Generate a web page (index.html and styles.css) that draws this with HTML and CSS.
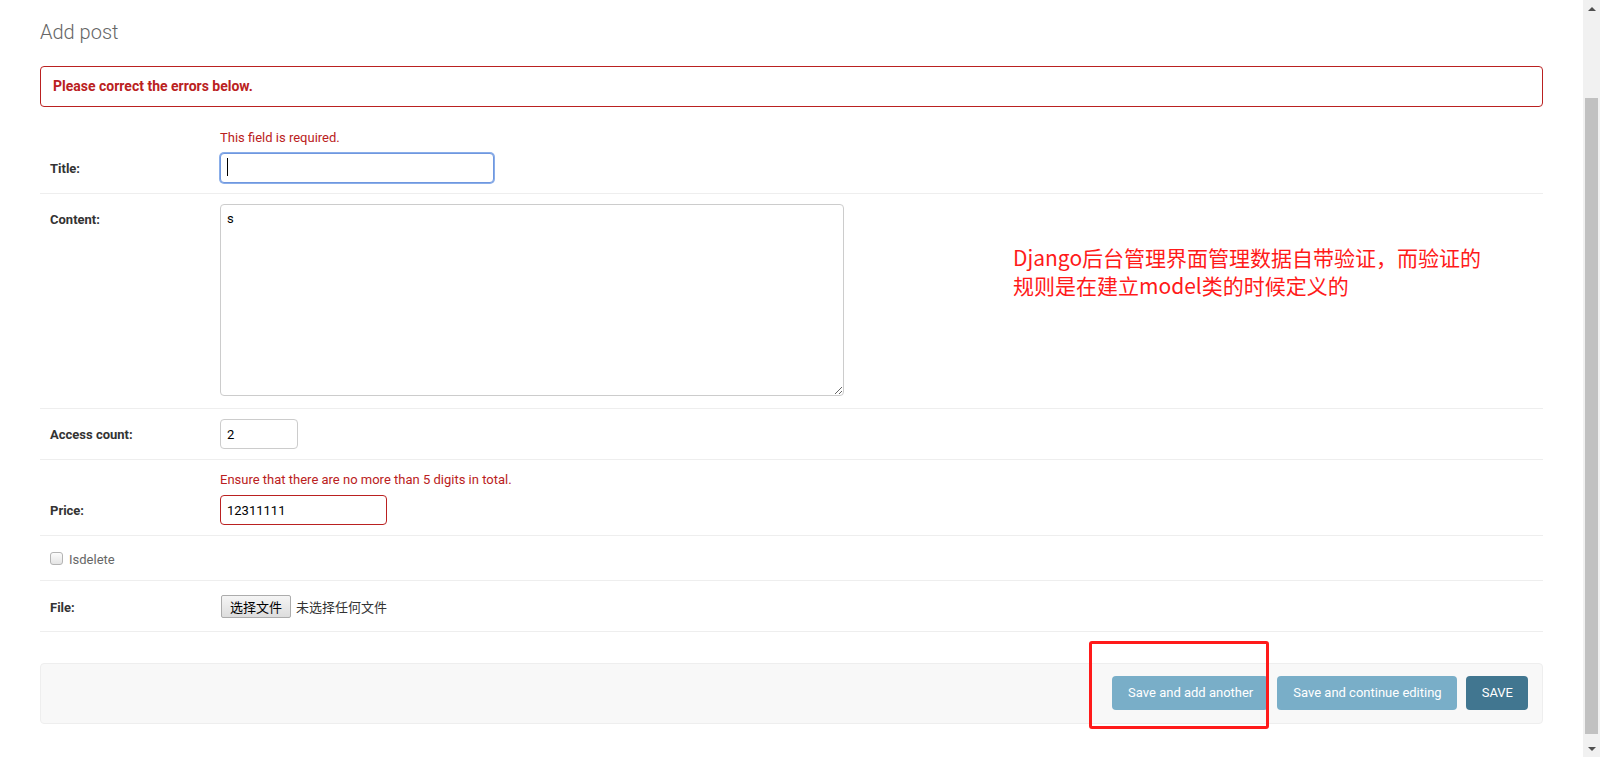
FILE: index.html
```html
<!DOCTYPE html>
<html lang="zh-CN">
<head>
    <meta charset="UTF-8">
    <meta name="viewport" content="width=device-width, initial-scale=1.0">
    <title>Add post | Django site admin</title>
    <link rel="stylesheet" href="styles.css">
</head>
<body>
    <div id="content" class="content">
        <h1>Add post</h1>

        <form class="post-form" action="" method="post">
            <p class="errornote">Please correct the errors below.</p>

            <fieldset class="module aligned">
                <div class="form-row errors field-title">
                    <ul class="errorlist"><li>This field is required.</li></ul>
                    <div class="field-line">
                        <label class="required" for="id_title">Title:</label>
                        <div class="input-wrap">
                            <input type="text" id="id_title" class="vTextField is-focused" maxlength="50">
                            <span class="caret"></span>
                        </div>
                    </div>
                </div>

                <div class="form-row field-content">
                    <div class="field-line">
                        <label class="required" for="id_content">Content:</label>
                        <textarea id="id_content" class="vLargeTextField" cols="40" rows="10">s</textarea>
                    </div>
                </div>

                <div class="form-row field-access_count">
                    <div class="field-line">
                        <label class="required" for="id_access_count">Access count:</label>
                        <input type="number" id="id_access_count" class="vIntegerField" value="2">
                    </div>
                </div>

                <div class="form-row errors field-price">
                    <ul class="errorlist"><li>Ensure that there are no more than 5 digits in total.</li></ul>
                    <div class="field-line">
                        <label class="required" for="id_price">Price:</label>
                        <input type="text" id="id_price" class="vDecimalField" value="12311111">
                    </div>
                </div>

                <div class="form-row field-isdelete">
                    <div class="checkbox-row">
                        <input type="checkbox" id="id_isdelete" class="fake-checkbox">
                        <label class="vCheckboxLabel" for="id_isdelete">Isdelete</label>
                    </div>
                </div>

                <div class="form-row field-file">
                    <div class="field-line centered">
                        <label class="required" for="id_file">File:</label>
                        <div class="file-input">
                            <button type="button" class="file-btn">选择文件</button>
                            <span class="file-name">未选择任何文件</span>
                        </div>
                    </div>
                </div>
            </fieldset>

            <div class="submit-row">
                <input type="submit" value="Save and add another" name="_addanother">
                <input type="submit" value="Save and continue editing" name="_continue">
                <input type="submit" value="SAVE" class="default" name="_save">
            </div>
        </form>

        <!-- 截图上的标注 -->
        <div class="note">Django后台管理界面管理数据自带验证，而验证的<br>规则是在建立model类的时候定义的</div>
        <div class="note-box"></div>
    </div>

    <div class="scrollbar">
        <div class="scroll-arrow up"></div>
        <div class="scroll-track">
            <div class="scroll-thumb"></div>
        </div>
        <div class="scroll-arrow down"></div>
    </div>
</body>
</html>
```

FILE: styles.css
```css
* {
    margin: 0;
    padding: 0;
    box-sizing: border-box;
}

html, body {
    height: 100%;
}

body {
    font-family: Roboto, "Noto Sans CJK SC", sans-serif;
    font-size: 13px;
    color: #333;
    background: #fff;
    display: flex;
    overflow: hidden;
}

.content {
    flex: 1;
    position: relative;
    padding: 20px 40px 0 40px;
}

h1 {
    font-size: 20px;
    font-weight: 300;
    line-height: 24px;
    color: #666;
    margin-bottom: 22px;
}

.errornote {
    font-size: 14px;
    font-weight: bold;
    line-height: 19px;
    color: #ba2121;
    border: 1px solid #ba2121;
    border-radius: 4px;
    padding: 10px 12px;
    margin-bottom: 11px;
}

fieldset {
    border: none;
}

.form-row {
    padding: 10px;
    border-bottom: 1px solid #eee;
}

.errorlist {
    list-style: none;
    color: #ba2121;
    line-height: 19px;
    padding-left: 170px;
    margin-bottom: 6px;
}

.field-line {
    display: flex;
    align-items: flex-start;
}

.field-line.centered {
    align-items: center;
    height: 30px;
}

.field-line label {
    width: 170px;
    flex-shrink: 0;
    padding-top: 8px;
    line-height: 16px;
}

.field-line.centered label {
    padding-top: 3px;
}

label.required {
    font-weight: bold;
    color: #333;
}

input[type=text],
input[type=number],
textarea {
    font-family: Roboto, sans-serif;
    font-size: 13px;
    line-height: 18px;
    color: #000;
    border: 1px solid #ccc;
    border-radius: 4px;
    padding: 5px 6px;
    background: #fff;
    outline: none;
}

input[type=number] {
    -moz-appearance: textfield;
}

input[type=number]::-webkit-inner-spin-button,
input[type=number]::-webkit-outer-spin-button {
    -webkit-appearance: none;
}

.input-wrap {
    position: relative;
}

.vTextField {
    width: 274px;
    height: 30px;
}

.vTextField.is-focused {
    border-color: #6f97df;
    box-shadow: 0 0 0 1px #8aaee9;
}

.caret {
    position: absolute;
    left: 7px;
    top: 5px;
    width: 1px;
    height: 18px;
    background: #000;
}

.vLargeTextField {
    width: 624px;
    height: 192px;
    margin-bottom: 2px;
    resize: both;
}

.vIntegerField {
    width: 78px;
    height: 30px;
}

.vDecimalField {
    width: 167px;
    height: 30px;
}

.field-price .vDecimalField {
    border-color: #ba2121;
}

.checkbox-row {
    display: flex;
    align-items: center;
    height: 24px;
    padding-top: 1px;
}

.fake-checkbox {
    -webkit-appearance: none;
    appearance: none;
    width: 13px;
    height: 13px;
    border: 1px solid #b4b4b4;
    border-radius: 3px;
    background: linear-gradient(#fcfcfc, #e4e4e4);
}

.vCheckboxLabel {
    color: #666;
    padding-left: 6px;
    padding-top: 2px;
    line-height: 16px;
}

.file-input {
    display: flex;
    align-items: center;
    gap: 5px;
    padding-left: 1px;
}

.file-btn {
    font-family: "Noto Sans CJK SC", sans-serif;
    font-size: 13px;
    line-height: 19px;
    height: 23px;
    padding: 0 8px;
    color: #000;
    border: 1px solid #acacac;
    border-radius: 2px;
    background: linear-gradient(#f5f5f5, #dddddd);
}

.file-name {
    font-family: "Noto Sans CJK SC", sans-serif;
    color: #333;
}

.submit-row {
    display: flex;
    justify-content: flex-end;
    gap: 9px;
    margin-top: 31px;
    padding: 12px 14px 13px;
    background: #f8f8f8;
    border: 1px solid #eee;
    border-radius: 4px;
}

.submit-row input {
    font-family: Roboto, sans-serif;
    font-size: 13px;
    line-height: 14px;
    color: #fff;
    background: #79aec8;
    border: none;
    border-radius: 4px;
    padding: 10px 15px 10px 16px;
    cursor: pointer;
}

.submit-row input.default {
    background: #417690;
}

.note {
    position: absolute;
    left: 1013px;
    top: 243px;
    font-family: "Noto Sans CJK SC", sans-serif;
    font-size: 21px;
    line-height: 28px;
    color: #ff1a1a;
}

.note-box {
    position: absolute;
    left: 1089px;
    top: 641px;
    width: 180px;
    height: 88px;
    border: 3px solid #ff1a1a;
    border-radius: 3px;
}

.scrollbar {
    width: 17px;
    height: 100vh;
    background: #f1f1f1;
    display: flex;
    flex-direction: column;
    flex-shrink: 0;
}

.scroll-arrow {
    height: 17px;
    display: flex;
    align-items: center;
    justify-content: center;
}

.scroll-arrow::after {
    content: "";
    border-left: 4px solid transparent;
    border-right: 4px solid transparent;
}

.scroll-arrow.up::after {
    border-bottom: 4px solid #505050;
}

.scroll-arrow.down::after {
    border-top: 4px solid #505050;
}

.scroll-track {
    flex: 1;
    display: flex;
    padding: 81px 2px 6px;
}

.scroll-thumb {
    flex: 1;
    background: #c1c1c1;
}
```
